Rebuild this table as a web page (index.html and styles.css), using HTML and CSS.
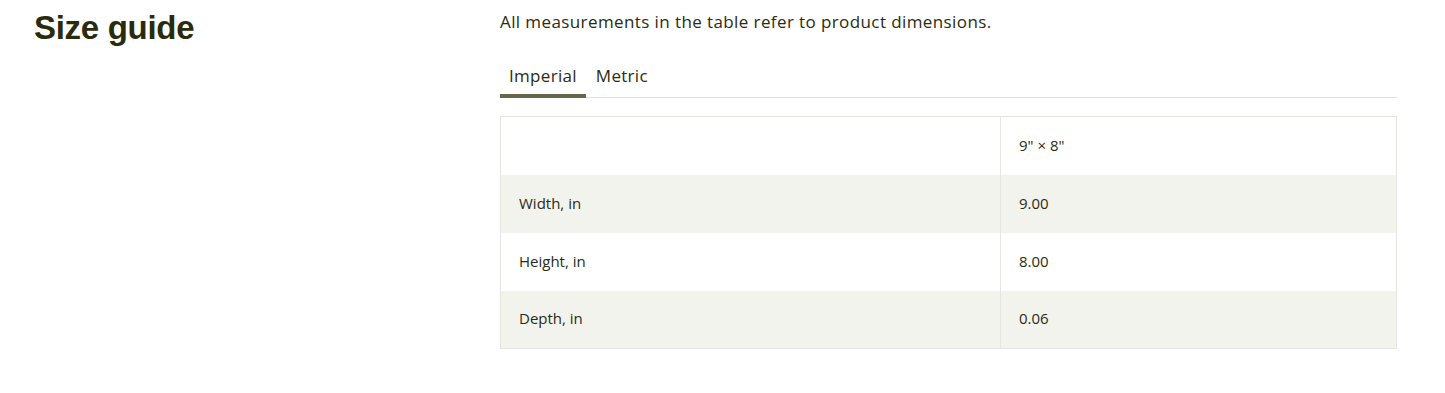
FILE: index.html
```html
<!DOCTYPE html>
<html>
<head>
<meta charset="utf-8">
<link rel="stylesheet" href="styles.css">
</head>
<body>
<div class="page">
  <div class="side">
    <h2 class="title">Size guide</h2>
  </div>
  <div class="main">
    <p class="desc">All measurements in the table refer to product dimensions.</p>
    <div class="tabs">
      <button class="tab active">Imperial</button>
      <button class="tab">Metric</button>
    </div>
    <table class="sizes">
      <colgroup><col class="c1"><col class="c2"></colgroup>
      <tr class="head"><td></td><td>9" × 8"</td></tr>
      <tr class="alt"><td>Width, in</td><td>9.00</td></tr>
      <tr><td>Height, in</td><td>8.00</td></tr>
      <tr class="alt"><td>Depth, in</td><td>0.06</td></tr>
    </table>
  </div>
</div>
</body>
</html>
```
FILE: styles.css
```css
* { box-sizing: border-box; }
body {
  margin: 0;
  background: #fff;
  font-family: "Open Sans", "Liberation Sans", Arial, sans-serif;
  color: #2b2b12;
}
.page {
  display: flex;
  padding: 0 48px 0 34px;
}
.side {
  width: 466px;
  flex: none;
}
.title {
  margin: 8px 0 0;
  font-family: "Liberation Sans", Arial, sans-serif;
  font-size: 33px;
  line-height: 40px;
  font-weight: 700;
  color: #2a2b0c;
  letter-spacing: -0.3px;
}
.main {
  width: 897px;
  flex: none;
}
.desc {
  margin: 10px 0 0;
  font-size: 17px;
  line-height: 24px;
  letter-spacing: 0.4px;
}
.tabs {
  display: flex;
  margin-top: 28px;
  border-bottom: 1px solid #e3e3de;
}
.tab {
  background: none;
  border: 0;
  font: inherit;
  font-size: 17px;
  line-height: 24px;
  letter-spacing: 0.3px;
  color: #2b2b12;
  padding: 2px 9px 6px;
  border-bottom: 4px solid transparent;
  margin-bottom: -1px;
  cursor: pointer;
}
.tab.active {
  border-bottom-color: #66664a;
}
.tab + .tab { padding-left: 10px; }
.sizes {
  margin-top: 18px;
  width: 100%;
  table-layout: fixed;
  border-collapse: collapse;
  border: 1px solid #e6e6e0;
  font-size: 15px;
}
.sizes col.c1 { width: 500px; }
.sizes td {
  height: 58px;
  padding: 0 18px 2px;
  vertical-align: middle;
}
.sizes td + td {
  border-left: 1px solid #e6e6e0;
}
.sizes tr.alt { background: #f3f3ee; }
```
